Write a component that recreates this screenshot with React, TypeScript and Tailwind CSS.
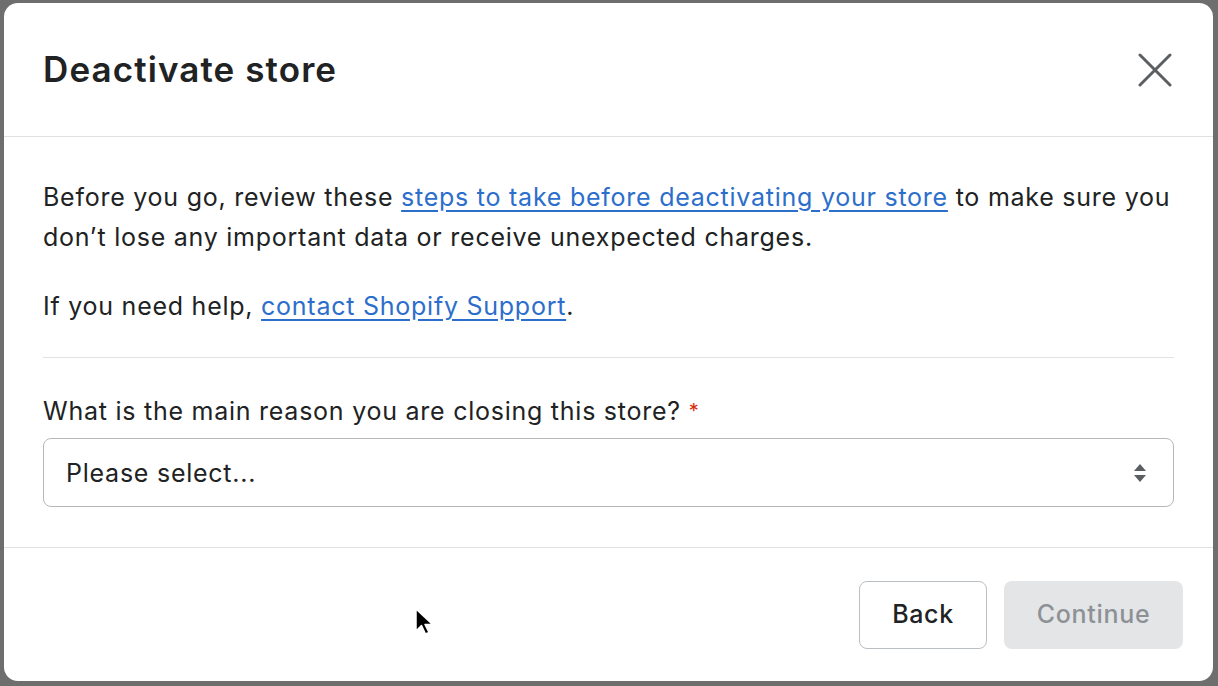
import React from "react";

const font = { fontFamily: "Inter, 'Noto Sans', sans-serif" };

export default function App() {
  return (
    <div className="w-[1218px] h-[686px] bg-[#6e6e6e] pt-[3px] pl-[4px] overflow-hidden" style={font}>
      <div className="relative w-[1209px] h-[678px] bg-white rounded-[14px] flex flex-col overflow-hidden">
        {/* header */}
        <div className="h-[134px] border-b border-[#dfe1e3] flex items-center justify-between pl-[39px] pr-[40px] shrink-0">
          <h2 className="text-[35px] font-semibold text-[#202223] tracking-[1.1px]">Deactivate store</h2>
          <button className="w-[36px] h-[36px] flex items-center justify-center text-[#5c5f62]">
            <svg width="34" height="34" viewBox="0 0 34 34" fill="none" stroke="currentColor" strokeWidth="3" strokeLinecap="round">
              <path d="M2 2L32 32M32 2L2 32" />
            </svg>
          </button>
        </div>

        {/* body */}
        <div className="px-[39px] pt-[40px] pb-[40px] border-b border-[#dfe1e3] text-[25px] leading-[40px] tracking-[0.75px] text-[#202223]">
          <p>
            Before you go, review these{" "}
            <a href="#" className="text-[#2c6ecb] underline underline-offset-[4px]">
              steps to take before deactivating your store
            </a>{" "}
            to make sure you don’t lose any important data or receive unexpected charges.
          </p>
          <p className="mt-[29px]">
            If you need help,{" "}
            <a href="#" className="text-[#2c6ecb] underline underline-offset-[4px]">
              contact Shopify Support
            </a>
            .
          </p>
          <div className="h-px bg-[#dfe1e3] mt-[31px] mb-[33px]" />
          <label className="block">
            What is the main reason you are closing this store?{" "}
            <span className="text-[#d72c0d] text-[20px] align-top">*</span>
          </label>
          <div className="mt-[7px] h-[69px] border border-[#b5b8bb] rounded-[8px] flex items-center justify-between pl-[22px] pr-[26px]">
            <span>Please select...</span>
            <svg width="14" height="22" viewBox="0 0 14 22" fill="#5c5f62">
              <path d="M7 2L13 9H1Z" />
              <path d="M7 20L13 13H1Z" />
            </svg>
          </div>
        </div>

        {/* footer */}
        <div className="flex-1 flex items-center justify-end gap-[17px] pr-[30px]">
          <button className="h-[68px] w-[128px] border border-[#babfc3] rounded-[8px] text-[25px] tracking-[0.6px] font-medium text-[#202223] bg-white">
            Back
          </button>
          <button className="h-[68px] w-[179px] rounded-[8px] text-[25px] tracking-[0.7px] font-medium text-[#8c9196] bg-[#e4e5e7]">
            Continue
          </button>
        </div>

        {/* mouse cursor */}
        <svg className="absolute left-[410px] top-[604px]" width="24" height="30" viewBox="0 0 24 30">
          <path d="M2 2L2 24L7.5 18.5L11.5 27L15 25.5L11 17.5L18.5 17.5Z" fill="#000" stroke="#fff" strokeWidth="1.5" strokeLinejoin="round" />
        </svg>
      </div>
    </div>
  );
}
